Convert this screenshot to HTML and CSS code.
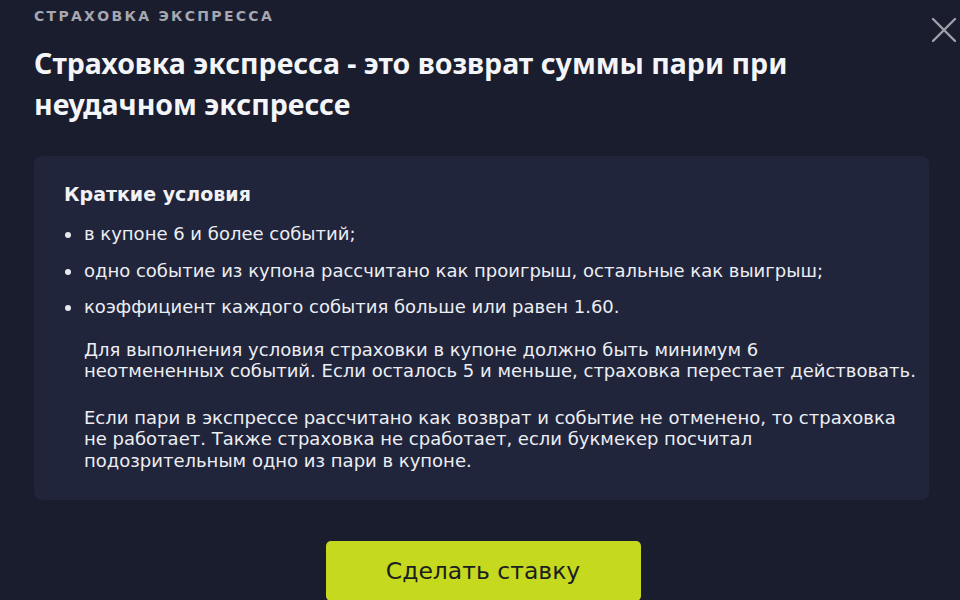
FILE: index.html
```html
<!DOCTYPE html>
<html lang="ru">

<head>
    <meta charset="UTF-8">
    <meta name="viewport" content="width=device-width, initial-scale=1.0">
    <title>Страховка экспресса</title>
    <link rel="stylesheet" href="styles.css">
</head>

<body>

    <div class="modal">
        <button class="close" aria-label="Закрыть">
            <svg width="26" height="26" viewBox="0 0 26 26">
                <path d="M2 2 L24 24 M24 2 L2 24" stroke="#9fa1aa" stroke-width="2.4" stroke-linecap="round" />
            </svg>
        </button>

        <div class="eyebrow">Страховка экспресса</div>
        <h1>Страховка экспресса - это возврат суммы пари при неудачном экспрессе</h1>

        <div class="terms">
            <h2>Краткие условия</h2>
            <ul>
                <li>в купоне 6 и более событий;</li>
                <li>одно событие из купона рассчитано как проигрыш, остальные как выигрыш;</li>
                <li>коэффициент каждого события больше или равен 1.60.</li>
            </ul>
            <p>Для выполнения условия страховки в купоне должно быть минимум 6<br>неотмененных событий. Если осталось 5 и меньше, страховка перестает действовать.</p>
            <p>Если пари в экспрессе рассчитано как возврат и событие не отменено, то страховка<br>не работает. Также страховка не сработает, если букмекер посчитал<br>подозрительным одно из пари в купоне.</p>
        </div>

        <div class="actions">
            <button class="bet">Сделать ставку</button>
        </div>
    </div>

</body>

</html>
```

FILE: styles.css
```css
* {
    box-sizing: border-box;
    margin: 0;
    padding: 0;
}

body {
    background-color: #1a1d2e;
    font-family: "DejaVu Sans", Arial, sans-serif;
    color: #eceef3;
    overflow: hidden;
}

.modal {
    position: relative;
    padding: 6px 31px 0 34px;
}

.close {
    position: absolute;
    top: 17px;
    right: 3px;
    background: none;
    border: none;
    cursor: pointer;
}

.eyebrow {
    font-size: 14px;
    line-height: 20px;
    letter-spacing: 2.3px;
    text-transform: uppercase;
    color: #a5a7b0;
    font-weight: 600;
}

h1 {
    margin-top: 17px;
    font-family: "Noto Sans", Arial, sans-serif;
    font-size: 28.5px;
    line-height: 41px;
    font-weight: 700;
    color: #f4f5f8;
    max-width: 800px;
}

.terms {
    margin-top: 31px;
    background-color: #21253b;
    border-radius: 8px;
    padding: 24px 8px 29px 30px;
}

h2 {
    font-size: 19px;
    line-height: 28px;
    font-weight: 600;
    color: #f1f2f6;
    margin-bottom: 14px;
}

ul {
    list-style: none;
}

li {
    position: relative;
    padding-left: 20px;
    font-size: 18px;
    line-height: 24px;
    margin-bottom: 12.5px;
}

li::before {
    content: "";
    position: absolute;
    left: 1px;
    top: 10px;
    width: 6px;
    height: 6px;
    border-radius: 50%;
    background-color: #e6e8ee;
}

p {
    padding-left: 20px;
    font-size: 18px;
    line-height: 21.3px;
    margin-top: 25.5px;
}

.terms ul + p {
    margin-top: 20px;
}

.actions {
    display: flex;
    justify-content: center;
    margin-top: 41px;
}

.bet {
    width: 315px;
    height: 60px;
    background-color: #c5d91e;
    border: none;
    border-radius: 5px;
    font-family: "DejaVu Sans", Arial, sans-serif;
    font-size: 23.5px;
    color: #1c1e1f;
    margin-left: 3px;
    cursor: pointer;
}
```
